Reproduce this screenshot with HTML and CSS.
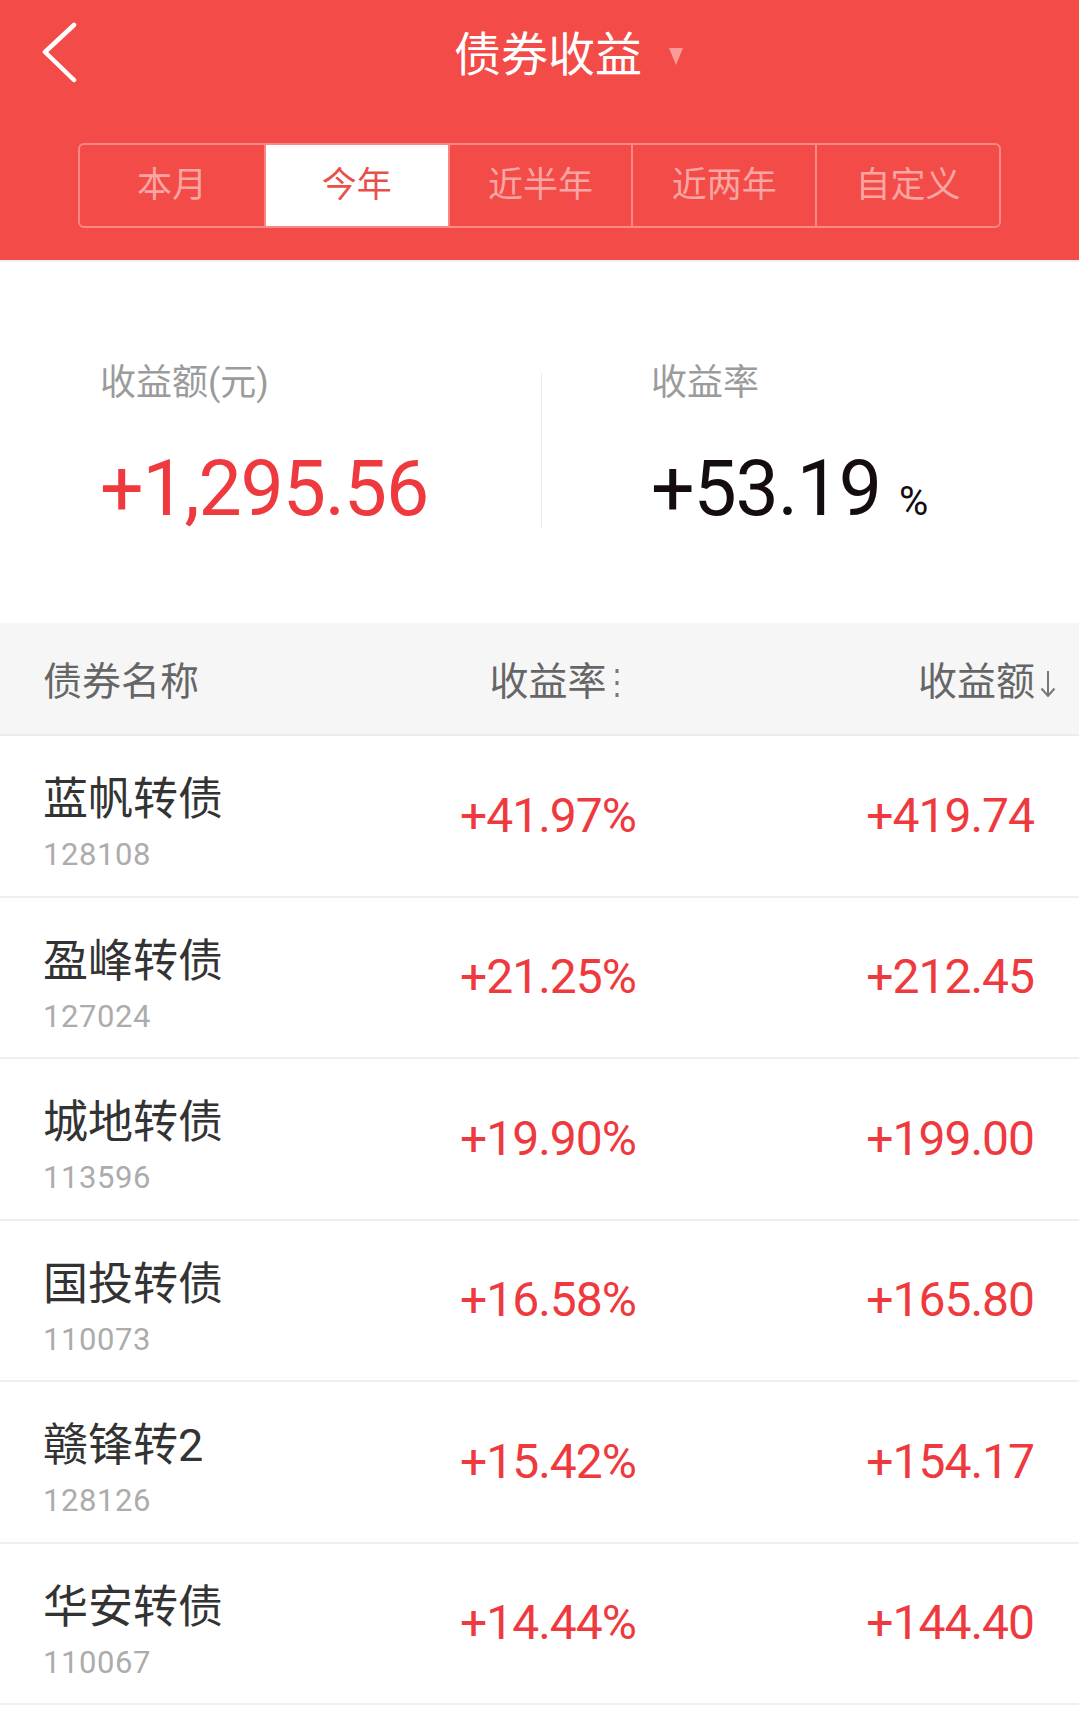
FILE: index.html
```html
<!DOCTYPE html>
<html lang="zh-CN">
<head>
<meta charset="utf-8">
<title>债券收益</title>
<link rel="stylesheet" href="styles.css">
</head>
<body>
<header class="header">
  <div class="nav">
    <svg class="back" viewBox="0 0 38 62" width="38" height="62"><polyline points="34,3 5,30 34,58" fill="none" stroke="#fff" stroke-width="4.5" stroke-linecap="round" stroke-linejoin="round"/></svg>
    <h1 class="title">债券收益</h1>
    <svg class="caret" viewBox="0 0 14 17" width="14" height="17"><polygon points="0,0 14,0 7,17" fill="#f99b98"/></svg>
  </div>
  <div class="tabs">
    <div class="tab">本月</div>
    <div class="tab active">今年</div>
    <div class="tab">近半年</div>
    <div class="tab">近两年</div>
    <div class="tab">自定义</div>
  </div>
</header>

<section class="summary">
  <div class="stat stat-left">
    <div class="stat-label">收益额(元)</div>
    <div class="stat-value red">+1,295.56</div>
  </div>
  <div class="divider"></div>
  <div class="stat stat-right">
    <div class="stat-label">收益率</div>
    <div class="stat-value dark">+53.19<span class="pct">%</span></div>
  </div>
</section>

<div class="thead">
  <div class="th th-name">债券名称</div>
  <div class="th th-rate">收益率<svg class="dots" viewBox="0 0 4 30" width="4" height="30"><rect x="0.5" y="0" width="3" height="4" fill="#777"/><rect x="0.5" y="12" width="3" height="4" fill="#777"/><rect x="0.5" y="24" width="3" height="4" fill="#777"/></svg></div>
  <div class="th th-amt">收益额<svg class="arrow" viewBox="0 0 18 28" width="18" height="28"><path d="M9 1 V26 M2.5 18.5 L9 26 L15.5 18.5" fill="none" stroke="#777" stroke-width="2"/></svg></div>
</div>

<div class="list">
  <div class="row">
    <div class="bond"><div class="bond-name">蓝帆转债</div><div class="bond-code">128108</div></div>
    <div class="rate">+41.97%</div>
    <div class="amt">+419.74</div>
  </div>
  <div class="row">
    <div class="bond"><div class="bond-name">盈峰转债</div><div class="bond-code">127024</div></div>
    <div class="rate">+21.25%</div>
    <div class="amt">+212.45</div>
  </div>
  <div class="row">
    <div class="bond"><div class="bond-name">城地转债</div><div class="bond-code">113596</div></div>
    <div class="rate">+19.90%</div>
    <div class="amt">+199.00</div>
  </div>
  <div class="row">
    <div class="bond"><div class="bond-name">国投转债</div><div class="bond-code">110073</div></div>
    <div class="rate">+16.58%</div>
    <div class="amt">+165.80</div>
  </div>
  <div class="row">
    <div class="bond"><div class="bond-name">赣锋转2</div><div class="bond-code">128126</div></div>
    <div class="rate">+15.42%</div>
    <div class="amt">+154.17</div>
  </div>
  <div class="row">
    <div class="bond"><div class="bond-name">华安转债</div><div class="bond-code">110067</div></div>
    <div class="rate">+14.44%</div>
    <div class="amt">+144.40</div>
  </div>
</div>
</body>
</html>
```
FILE: styles.css
```css
* { box-sizing: border-box; margin: 0; padding: 0; }
body {
  width: 1079px;
  margin: 0;
  background: #fff;
  font-family: Roboto, "Noto Sans CJK SC", sans-serif;
  overflow: hidden;
}

/* header */
.header {
  background: #f34b48;
  height: 260px;
}
.nav {
  height: 110px;
  display: flex;
  align-items: center;
  padding-left: 40px;
}
.back { display: block; margin-bottom: 5px; }
.title {
  margin-left: 376px;
  font-size: 47px;
  line-height: 60px;
  font-weight: 400;
  color: #fff;
}
.caret { display: block; margin-left: 27px; margin-top: 3px; }

.tabs {
  margin: 33px 78px 0 78px;
  height: 85px;
  border: 2px solid #f98784;
  border-radius: 6px;
  display: grid;
  grid-template-columns: repeat(5, 1fr);
  overflow: hidden;
}
.tab {
  display: flex;
  align-items: center;
  justify-content: center;
  font-size: 35px;
  line-height: 44px;
  color: #f9a5a2;
  border-left: 2px solid #f98784;
}
.tab:first-child { border-left: none; }
.tab.active { background: #fff; color: #e8504c; }

/* summary */
.summary {
  border-top: 2px solid #f0f0f0;
  display: flex;
  align-items: flex-start;
  padding: 99px 0 89px 0;
}
.stat-left { width: 541px; padding-left: 100px; }
.stat-right { padding-left: 109px; }
.divider { width: 1px; height: 155px; background: #ececec; margin-top: 12px; }
.stat-label {
  font-size: 36px;
  line-height: 44px;
  color: #9b9b9b;
}
.stat-value {
  margin-top: 39px;
  font-size: 77px;
  line-height: 90px;
  letter-spacing: -1.2px;
}
.red { color: #ee3a3e; }
.dark { color: #150d0d; }
.pct { font-size: 40px; line-height: 0; margin-left: 18px; letter-spacing: 0; }

/* table header */
.thead {
  height: 113px;
  background: #f6f6f6;
  border-bottom: 2px solid #ececec;
  display: grid;
  grid-template-columns: 360px 290px 1fr;
  align-items: center;
  padding: 6px 22px 0 43px;
}
.th {
  font-size: 39px;
  line-height: 48px;
  color: #666;
  display: flex;
  align-items: center;
}
.th-rate { justify-self: center; padding-left: 12px; }
.th-amt { justify-self: end; }
.dots { display: block; margin-left: 8px; margin-top: 4px; }
.arrow { display: block; margin-left: 4px; margin-top: 4px; }

/* rows */
.row {
  height: 161.5px;
  border-bottom: 2px solid #efefef;
  display: grid;
  grid-template-columns: 360px 290px 1fr;
  align-items: center;
  padding: 0 45px 0 43px;
}
.bond { align-self: start; padding-top: 37px; }
.bond-name {
  font-size: 45px;
  line-height: 54px;
  color: #333;
}
.bond-code {
  margin-top: 10px;
  font-size: 31px;
  line-height: 36px;
  letter-spacing: 0.6px;
  color: #acacac;
}
.rate, .amt {
  font-size: 48px;
  line-height: 56px;
  letter-spacing: -1px;
  color: #ee3a3e;
}
.rate { justify-self: center; }
.amt { justify-self: end; }
```
